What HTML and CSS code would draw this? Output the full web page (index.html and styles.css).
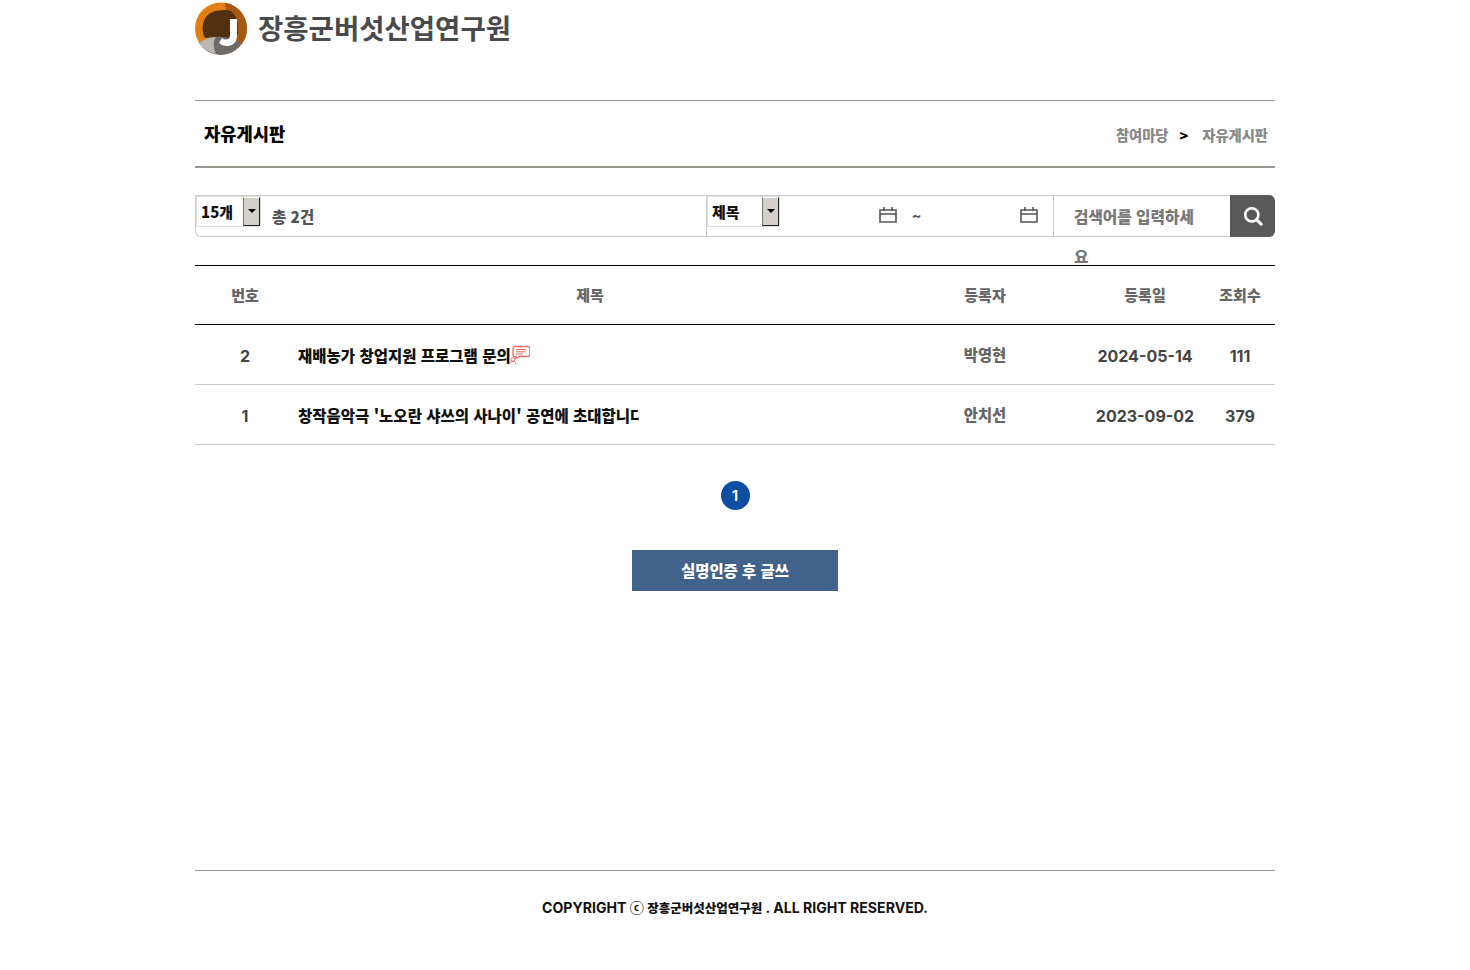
FILE: index.html
```html
<!DOCTYPE html>
<html lang="ko">
<head>
  <meta charset="UTF-8">
  <meta name="viewport" content="width=device-width, initial-scale=1.0">
  <title>자유게시판 - 장흥군버섯산업연구원</title>
  <link rel="stylesheet" href="styles.css">
</head>
<body>
  <div class="wrap">
    <header class="site-header">
      <a href="#" class="logo">
        <svg class="logo-mark" viewBox="0 0 52 53" xmlns="http://www.w3.org/2000/svg">
          <circle cx="26" cy="26.5" r="26" fill="#e07f16"/>
          <path d="M30 .8A26 26 0 0 1 52 26.5 26 26 0 0 1 46 43L34 36Z" fill="#a9590f"/>
          <path d="M9 19C11 11 20 8 31 8c7 0 12 7 12 17 0 7-1 12-3 17L24 35 10 36C7 31 7 24 9 19Z" fill="#52300f"/>
          <path d="M4 41c9-7 23-8 34-4l9 4a26 26 0 0 1-21 12A26 26 0 0 1 4 41Z" fill="#6e6a6a"/>
          <path d="M4 41c5-4 11-6 17-6-3 4-3 10 0 17A26 26 0 0 1 4 41Z" fill="#bdb7b3"/>
          <path d="M35 17h7v17c0 6-4 10-10 10-3 0-6-1-8-3l3-5c2 2 8 3 8-3Z" fill="#fff"/>
        </svg>
        <span class="logo-text">장흥군버섯산업연구원</span>
      </a>
    </header>

    <div class="page-title">
      <h1>자유게시판</h1>
      <nav class="crumbs">
        <span>참여마당</span>
        <b>&gt;</b>
        <span>자유게시판</span>
      </nav>
    </div>

    <form class="toolbar">
      <div class="tool-left">
        <label class="fake-select count-select">
          <span>15개</span>
          <i class="arrow"></i>
        </label>
        <span class="total">총 2건</span>
      </div>
      <div class="tool-mid">
        <label class="fake-select field-select">
          <span>제목</span>
          <i class="arrow"></i>
        </label>
        <div class="dates">
          <svg class="cal" viewBox="0 0 18 16" xmlns="http://www.w3.org/2000/svg"><path d="M1 3h16v12H1zM1 7h16M5 0v4M13 0v4" fill="none" stroke="#555" stroke-width="1.6"/></svg>
          <span class="tilde">~</span>
          <svg class="cal cal-end" viewBox="0 0 18 16" xmlns="http://www.w3.org/2000/svg"><path d="M1 3h16v12H1zM1 7h16M5 0v4M13 0v4" fill="none" stroke="#555" stroke-width="1.6"/></svg>
        </div>
      </div>
      <div class="tool-search">검색어를 입력하세요</div>
      <button type="button" class="search-btn">
        <svg viewBox="0 0 20 20" xmlns="http://www.w3.org/2000/svg"><circle cx="8.8" cy="8.8" r="6.6" fill="none" stroke="#fff" stroke-width="2.6"/><path d="M13.6 13.6l4.6 4.6" stroke="#fff" stroke-width="3" stroke-linecap="round"/></svg>
      </button>
    </form>

    <table class="board">
      <thead>
        <tr>
          <th class="col-no">번호</th>
          <th class="col-title">제목</th>
          <th class="col-name">등록자</th>
          <th class="col-date">등록일</th>
          <th class="col-hit">조회수</th>
        </tr>
      </thead>
      <tbody>
        <tr>
          <td>2</td>
          <td class="subject">
            <a href="#">재배농가 창업지원 프로그램 문의</a>
            <svg class="reply-icon" viewBox="0 0 22 20" xmlns="http://www.w3.org/2000/svg">
              <path d="M6 1.5h14a2 2 0 0 1 2 2v6a2 2 0 0 1-2 2H11l-3 2v-2a2 2 0 0 1-3-2v-6a2 2 0 0 1 2-2Z" fill="#fff" stroke="#ea6a64" stroke-width="1.3"/>
              <path d="M8 4.5h10M8 6.8h10M8 9h7" stroke="#ea6a64" stroke-width="1"/>
              <circle cx="5" cy="14.5" r="1.8" fill="none" stroke="#ea6a64"/>
              <path d="M1 19.5c0-2 2-3 4-3s3 1 3 3" fill="none" stroke="#ea6a64"/>
            </svg>
          </td>
          <td class="name">박영현</td>
          <td>2024-05-14</td>
          <td>111</td>
        </tr>
        <tr>
          <td>1</td>
          <td class="subject"><a href="#">창작음악극 '노오란 샤쓰의 사나이' 공연에 초대합니다</a></td>
          <td class="name">안치선</td>
          <td>2023-09-02</td>
          <td>379</td>
        </tr>
      </tbody>
    </table>

    <div class="pager"><a href="#" class="page-on">1</a></div>

    <div class="actions"><a href="#" class="write-btn">실명인증 후 글쓰</a></div>

    <footer class="site-footer">COPYRIGHT ⓒ <span class="footer-name">장흥군버섯산업연구원</span> . ALL RIGHT RESERVED.</footer>
  </div>
</body>
</html>
```

FILE: styles.css
```css
/* Base styles */
body, html {
  margin: 0;
  padding: 0;
  background-color: #fff;
  color: #444;
  font-family: Inter, "Noto Sans CJK KR", sans-serif;
}

a {
  color: inherit;
  text-decoration: none;
}

.wrap {
  width: 1080px;
  margin: 0 auto;
}

/* Header */
.site-header {
  height: 100px;
  border-bottom: 1px solid #999;
}

.logo {
  display: flex;
  align-items: center;
  height: 57px;
}

.logo-mark {
  width: 52px;
  height: 53px;
}

.logo-text {
  margin: 0 0 2px 11px;
  font-family: "Noto Sans CJK KR", sans-serif;
  font-size: 27.5px;
  font-weight: 700;
  color: #4a4a4a;
  line-height: 1;
}

/* Page title */
.page-title {
  display: flex;
  align-items: center;
  justify-content: space-between;
  height: 65px;
  padding: 0 7px 0 9px;
  border-bottom: 2px solid #9c9a92;
}

.page-title h1 {
  margin: 0 0 2px;
  font-family: "Noto Sans CJK KR", sans-serif;
  font-size: 17.7px;
  font-weight: 900;
  color: #000;
}

.crumbs {
  display: flex;
  align-items: center;
  margin-top: 1px;
  font-family: "Noto Sans CJK KR", sans-serif;
  font-size: 14.3px;
  font-weight: 900;
  color: #888;
}

.crumbs b {
  margin: 0 14px 0 11px;
  color: #000;
}

/* Search toolbar */
.toolbar {
  display: flex;
  height: 42px;
  margin-top: 27px;
  font-family: "Noto Sans CJK KR", sans-serif;
  font-weight: 700;
}

.tool-left,
.tool-mid,
.tool-search {
  box-sizing: border-box;
  display: flex;
  height: 42px;
  border: 1px solid #ccc;
  border-right: 0;
}

.tool-left {
  width: 511px;
  border-radius: 0 0 0 6px;
}

.tool-mid {
  width: 347px;
}

.tool-search {
  display: block;
  width: 177px;
  padding: 1px 32px 0 20px;
  font-size: 15.7px;
  font-weight: 900;
  line-height: 40px;
  color: #777;
  word-break: break-all;
}

.fake-select {
  position: relative;
  box-sizing: border-box;
  display: block;
  height: 31px;
  border: 1px solid #ddd;
  padding: 5px 0 0 4px;
  font-size: 15px;
  line-height: 20px;
  font-weight: 900;
  color: #111;
}

.count-select {
  width: 65px;
}

.field-select {
  width: 73px;
}

.arrow {
  position: absolute;
  top: 0;
  right: 0;
  width: 15px;
  height: 27px;
  background-color: #d4d0c8;
  border-top: 1px solid #fff;
  border-left: 1px solid #777;
  border-right: 1px solid #222;
  border-bottom: 1px solid #222;
}

.arrow::after {
  content: "";
  position: absolute;
  top: 11px;
  left: 4px;
  border-top: 4px solid #000;
  border-left: 4px solid transparent;
  border-right: 4px solid transparent;
}

.total {
  margin: 10px 0 0 11px;
  font-size: 15.5px;
  font-weight: 900;
  line-height: 20px;
  color: #555;
}

.dates {
  display: flex;
  align-items: center;
  height: 38px;
}

.cal {
  width: 18px;
  height: 16px;
  margin-left: 99px;
}

.tilde {
  margin-left: 15px;
  font-size: 15px;
  font-weight: 900;
  color: #555;
}

.search-btn {
  display: flex;
  align-items: center;
  justify-content: center;
  width: 45px;
  height: 42px;
  padding: 0;
  border: 0;
  border-radius: 0 6px 6px 0;
  background-color: #595959;
}

.search-btn svg {
  width: 20px;
  height: 20px;
}

/* Board table */
.board {
  width: 1080px;
  margin-top: 28px;
  border-collapse: collapse;
  table-layout: fixed;
  border-top: 1px solid #000;
}

.board th,
.board td {
  box-sizing: border-box;
  padding: 0;
}

.board th {
  height: 59px;
  padding-bottom: 2px;
  border-bottom: 1px solid #000;
  font-family: "Noto Sans CJK KR", sans-serif;
  font-size: 15px;
  font-weight: 900;
  color: #666;
}

.board td {
  height: 60px;
  padding-top: 2px;
  border-bottom: 1px solid #ccc;
  text-align: center;
  font-size: 16px;
  font-weight: 700;
  color: #444;
}

.col-no { width: 100px; }
.col-title { width: 590px; }
.col-name { width: 200px; }
.col-date { width: 120px; }
.col-hit { width: 70px; }

.board td.subject {
  position: relative;
  padding: 0 0 2px 3px;
  text-align: left;
  font-family: "Noto Sans CJK KR", sans-serif;
  font-size: 15.5px;
  font-weight: 900;
  color: #111;
}

/* long titles get cut off */
.subject a {
  display: inline-block;
  max-width: 341px;
  overflow: hidden;
  white-space: nowrap;
  vertical-align: middle;
}

.board td.name {
  padding: 0 0 2px;
  font-family: "Noto Sans CJK KR", sans-serif;
  font-size: 15.4px;
  font-weight: 900;
  color: #666;
}

.reply-icon {
  position: absolute;
  top: 20px;
  left: 213px;
  width: 22px;
  height: 20px;
}

/* Pagination */
.pager {
  display: flex;
  justify-content: center;
  margin-top: 36px;
}

.page-on {
  width: 29px;
  height: 29px;
  border-radius: 50%;
  background-color: #0b4ea2;
  color: #fff;
  font-size: 14px;
  font-weight: 700;
  line-height: 30px;
  text-align: center;
}

/* Write button */
.actions {
  display: flex;
  justify-content: center;
  margin-top: 40px;
}

.write-btn {
  width: 206px;
  height: 41px;
  background-color: #426389;
  color: #fff;
  font-family: "Noto Sans CJK KR", sans-serif;
  font-size: 15.4px;
  font-weight: 900;
  line-height: 41px;
  text-align: center;
}

/* Footer */
.site-footer {
  margin-top: 279px;
  padding-top: 27px;
  border-top: 1px solid #999;
  font-size: 14.1px;
  font-weight: 700;
  line-height: 20px;
  color: #111;
  text-align: center;
}

.footer-name {
  font-family: "Noto Sans CJK KR", sans-serif;
  font-size: 12.5px;
  font-weight: 900;
}
```
